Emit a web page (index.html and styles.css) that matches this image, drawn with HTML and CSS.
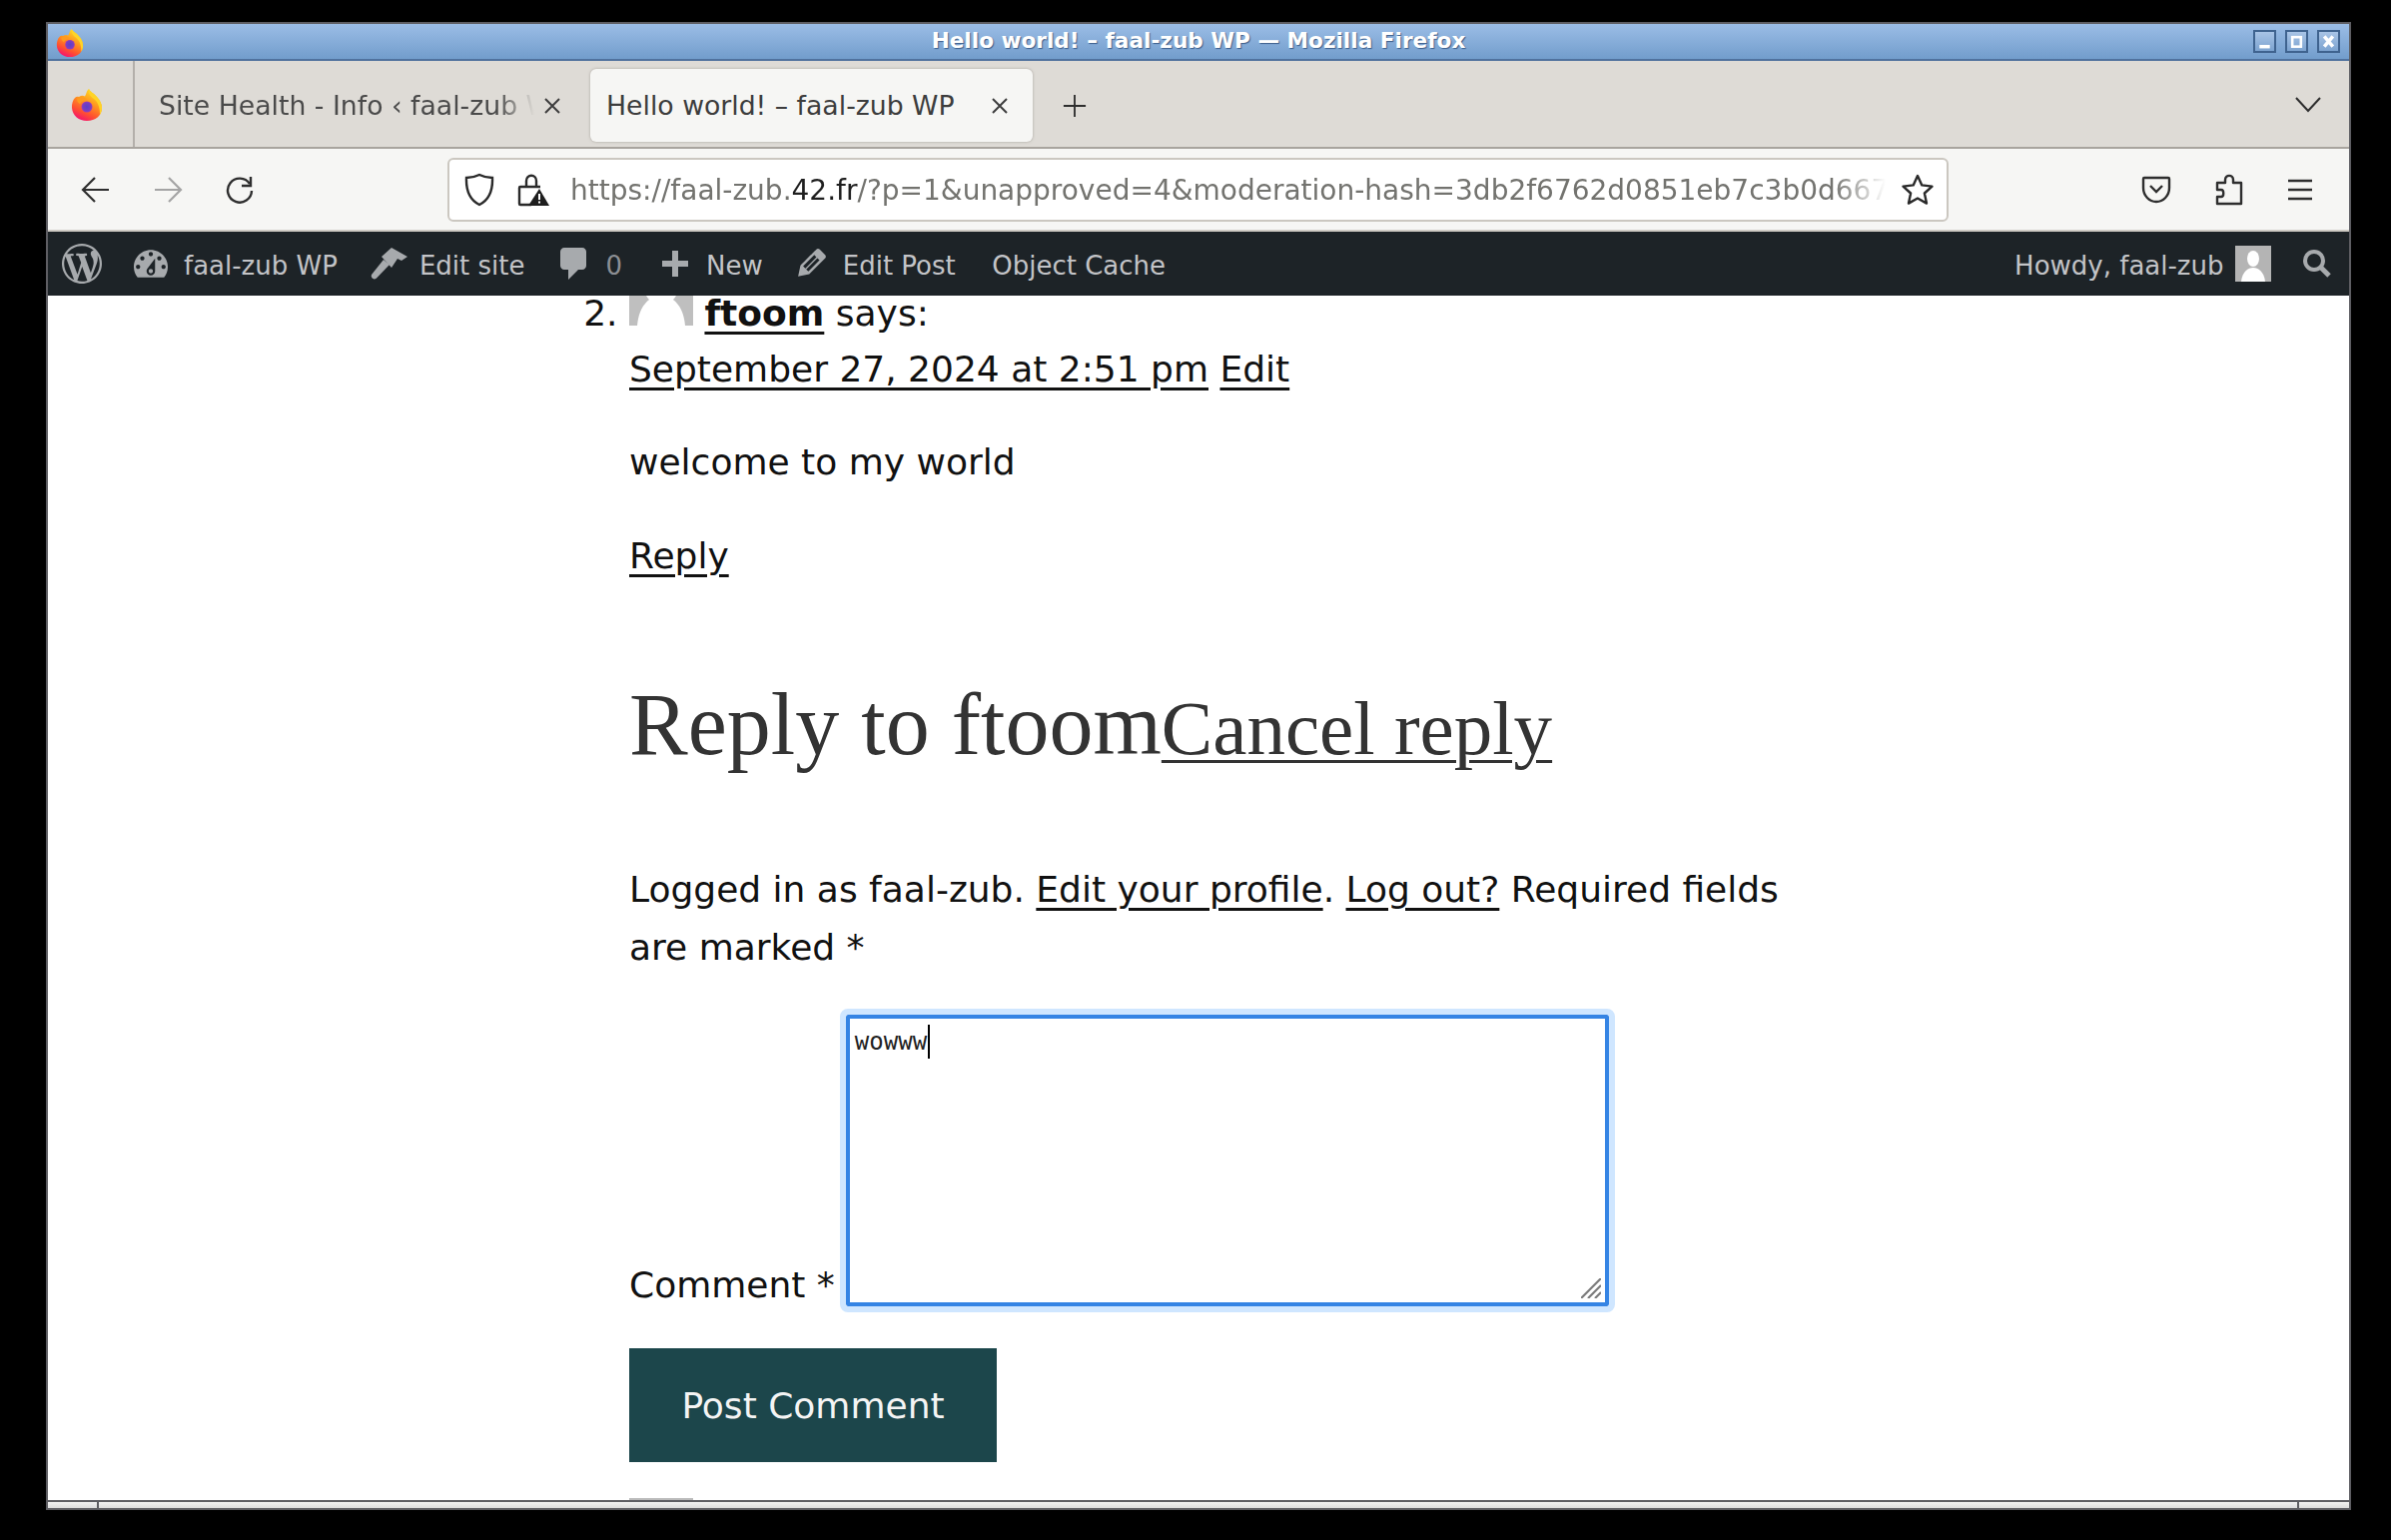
FILE: index.html
```html
<!DOCTYPE html>
<html lang="en">
<head>
<meta charset="utf-8">
<title>Hello world! – faal-zub WP — Mozilla Firefox</title>
<link rel="stylesheet" href="styles.css">
</head>
<body>
<svg class="defs" aria-hidden="true">
  <defs>
    <linearGradient id="fxOuter" x1="0.8" y1="0.05" x2="0.35" y2="1">
      <stop offset="0" stop-color="#ffe226"/>
      <stop offset="0.4" stop-color="#ff9a1f"/>
      <stop offset="0.75" stop-color="#ff5030"/>
      <stop offset="1" stop-color="#f5156c"/>
    </linearGradient>
    <radialGradient id="fxInner" cx="0.5" cy="0.5" r="0.55">
      <stop offset="0" stop-color="#5b3fc8"/>
      <stop offset="0.65" stop-color="#7a3ec0"/>
      <stop offset="1" stop-color="#b13bb0"/>
    </radialGradient>
    <symbol id="firefox" viewBox="0 0 32 34">
      <path fill="url(#fxOuter)" d="M18 1c1 3 5 4 8 8 3 3 5 7 5 11 0 7.700-6.500 13-15 13C8 33 1.500 27.700 1 20c-.3-4 1-8 3-10 1-1.200 2.500-1.500 4-1 2-1.300 4.500-1.500 6-.5C16 5 15.500 3 18 1z"/>
      <path fill="#ffd426" d="M18 1c1 3 5 4 8 8 3 3 5 7 5 11 0 3-1 5-2 7 0-6-1-12-6-16-3-2-6-5-5-10z"/>
      <circle cx="16" cy="19" r="5.500" fill="url(#fxInner)"/>
      <path fill="#ff9a1f" d="M6 11c3-2 8-2 10 1-3 0-5 1-7 4-2-1-3-3-3-5z"/>
    </symbol>
  </defs>
</svg>
<div class="window">
  <header class="titlebar">
    <svg class="title-logo"><use href="#firefox"/></svg>
    <div class="title-text">Hello world! – faal-zub WP — Mozilla Firefox</div>
    <div class="win-btns">
      <span class="win-btn"><svg viewBox="0 0 22 22"><rect x="5" y="15" width="12" height="4" fill="#fff"/></svg></span>
      <span class="win-btn"><svg viewBox="0 0 22 22"><rect x="6" y="6" width="10" height="11" fill="none" stroke="#fff" stroke-width="3"/></svg></span>
      <span class="win-btn"><svg viewBox="0 0 22 22"><path d="M6 5l10 12M16 5L6 17" stroke="#fff" stroke-width="4" fill="none"/></svg></span>
    </div>
  </header>

  <div class="tabbar">
    <div class="fx-cell"><svg class="fx-logo"><use href="#firefox"/></svg></div>
    <div class="tab tab-bg">
      <span class="tab-label">Site Health - Info ‹ faal-zub WP</span>
      <svg class="tab-close" viewBox="0 0 20 20"><path d="M3 3l14 14M17 3L3 17" stroke="#3d3d3d" stroke-width="2" fill="none"/></svg>
    </div>
    <div class="tab tab-active">
      <span class="tab-label-active">Hello world! – faal-zub WP</span>
      <svg class="tab-close" viewBox="0 0 20 20"><path d="M3 3l14 14M17 3L3 17" stroke="#3d3d3d" stroke-width="2" fill="none"/></svg>
    </div>
    <svg class="new-tab" viewBox="0 0 26 26"><path d="M13 1v24M1 13h24" stroke="#2e2e2e" stroke-width="2" fill="none"/></svg>
    <svg class="tab-list" viewBox="0 0 26 16"><path d="M1 1l12 13L25 1" stroke="#2e2e2e" stroke-width="2" fill="none"/></svg>
  </div>

  <nav class="navbar">
    <svg class="nav-icon nav-back" viewBox="0 0 30 30"><path d="M28 15H3M14 3L2 15l12 12" stroke="#2e2e2e" stroke-width="2.200" fill="none"/></svg>
    <svg class="nav-icon nav-fwd" viewBox="0 0 30 30"><path d="M2 15h25M16 3l12 12-12 12" stroke="#a4a4a4" stroke-width="2.200" fill="none"/></svg>
    <svg class="nav-icon nav-reload" viewBox="0 0 30 30"><path d="M25 9A12 12 0 1 0 27 16" stroke="#2e2e2e" stroke-width="2.400" fill="none"/><path d="M26 2v9h-9" stroke="#2e2e2e" stroke-width="2.400" fill="none"/></svg>
    <div class="urlbar">
      <svg class="url-shield" viewBox="0 0 30 34"><path d="M15 2c4 2 8 3 13 3 .5 12-3 22-13 27C5 27 1.500 17 2 5c5 0 9-1 13-3z" stroke="#2a2a2a" stroke-width="2.400" fill="none"/></svg>
      <svg class="url-lock" viewBox="0 0 32 34"><path d="M9 14V8c0-7 10-7 10 0v6" stroke="#2a2a2a" stroke-width="2.400" fill="none"/><path d="M14 32H3a1 1 0 0 1-1-1V15a1 1 0 0 1 1-1h20" stroke="#2a2a2a" stroke-width="2.400" fill="none"/><path d="M22 16l10 17H11z" fill="#1e1e1e"/><path d="M22 21v6M22 28.500v2" stroke="#fff" stroke-width="2"/></svg>
      <div class="url-text"><span class="url-dim">https://faal-zub.</span><span class="url-host">42.fr</span><span class="url-dim">/?p=1&amp;unapproved=4&amp;moderation-hash=3db2f6762d0851eb7c3b0d667a8e1f</span></div>
      <svg class="url-star" viewBox="0 0 34 34"><path d="M17 3l4.300 9.400 10.200 1.200-7.600 6.900 2.100 10.100L17 25.500l-9 5.100 2.100-10.100-7.600-6.900 10.200-1.200z" stroke="#2a2a2a" stroke-width="2.400" fill="none" stroke-linejoin="round"/></svg>
    </div>
    <div class="nav-right">
      <svg class="nav-icon" viewBox="0 0 30 30"><path d="M3 3h24a1 1 0 0 1 1 1v9c0 8-6 14-13 14S2 21 2 13V4a1 1 0 0 1 1-1z" stroke="#2e2e2e" stroke-width="2.400" fill="none"/><path d="M9 11l6 6 6-6" stroke="#2e2e2e" stroke-width="2.400" fill="none"/></svg>
      <svg class="nav-ext" viewBox="0 0 28 32"><path d="M10 9V6c0-5.500 8-5.500 8 0v3h8v21H2v-7h4c3 0 3-7 0-7H2V9z" stroke="#2e2e2e" stroke-width="2.400" fill="none" stroke-linejoin="round"/></svg>
      <svg class="nav-icon nav-menu" viewBox="0 0 30 30"><path d="M3 6h24M3 15h24M3 24h24" stroke="#2e2e2e" stroke-width="2.400" fill="none"/></svg>
    </div>
  </nav>

  <div class="adminbar">
    <a class="ab-logo"><svg class="ab-svg-logo" viewBox="0 0 20 20"><path d="M20 10c0-5.510-4.490-10-10-10C4.480 0 0 4.490 0 10c0 5.520 4.480 10 10 10 5.510 0 10-4.480 10-10zM7.780 15.370L4.370 6.220c.55-.02 1.170-.08 1.170-.08.5-.06.44-1.130-.06-1.110 0 0-1.450.11-2.370.11-.18 0-.37 0-.58-.01C4.120 2.690 6.870 1.110 10 1.110c2.330 0 4.450.87 6.050 2.340-.68-.11-1.650.39-1.650 1.580 0 .74.45 1.360.9 2.100.35.61.55 1.360.55 2.460 0 1.490-1.400 5-1.400 5l-3.030-8.370c.54-.02.82-.17.82-.17.5-.05.44-1.250-.06-1.220 0 0-1.440.12-2.380.12-.87 0-2.330-.12-2.330-.12-.5-.03-.56 1.200-.06 1.220l.92.08 1.260 3.410zM17.410 10c.24-.64.74-1.870.43-4.250.7 1.290 1.050 2.710 1.050 4.250 0 3.290-1.730 6.240-4.400 7.780.97-2.590 1.940-5.200 2.920-7.780zM6.100 18.090C3.120 16.650 1.110 13.530 1.110 10c0-1.300.23-2.480.72-3.590C3.250 10.300 4.670 14.200 6.100 18.090zm4.030-6.630l2.580 6.980c-.86.29-1.760.45-2.710.45-.79 0-1.570-.11-2.290-.33.81-2.380 1.620-4.740 2.420-7.100z"/></svg></a>
    <a class="ab-item"><svg class="ab-svg" viewBox="2 3 16 13"><path d="M3.760 16h12.480c1.100-1.370 1.760-3.110 1.760-5 0-4.420-3.580-8-8-8s-8 3.580-8 8c0 1.890.66 3.630 1.760 5zM10 4c.55 0 1 .45 1 1s-.45 1-1 1-1-.45-1-1 .45-1 1-1zM6 6c.55 0 1 .45 1 1s-.45 1-1 1-1-.45-1-1 .45-1 1-1zm8 0c.55 0 1 .45 1 1s-.45 1-1 1-1-.45-1-1 .45-1 1-1zm-5.370 5.550L12 7v6c0 1.100-.9 2-2 2s-2-.9-2-2c0-.57.24-1.080.63-1.450zM4 10c.55 0 1 .45 1 1s-.45 1-1 1-1-.45-1-1 .45-1 1-1zm12 0c.55 0 1 .45 1 1s-.45 1-1 1-1-.45-1-1 .45-1 1-1zm-5 3c0-.55-.45-1-1-1s-1 .45-1 1 .45 1 1 1 1-.45 1-1z"/></svg><span>faal-zub WP</span></a>
    <a class="ab-item ab-tight"><svg class="ab-svg-brush" viewBox="0 0 38 32"><path d="M2 27L14 12l6 5L7 30.500c-2.500 2-6 .5-5-3.500z"/><path d="M12 9L22 0l16 9-6 4-4-2-6 9z"/></svg><span>Edit site</span></a>
    <a class="ab-item ab-comments"><svg class="ab-svg-comment" viewBox="3 2 13 16"><path d="M5 2h9c1.100 0 2 .9 2 2v7c0 1.100-.9 2-2 2h-2l-5 5v-5H5c-1.100 0-2-.9-2-2V4c0-1.100.9-2 2-2z"/></svg><span class="ab-count">0</span></a>
    <a class="ab-item ab-new"><svg class="ab-svg-plus" viewBox="4 2 13 13"><path d="M17 7v3h-5v5H9v-5H4V7h5V2h3v5h5z"/></svg><span>New</span></a>
    <a class="ab-item ab-edit"><svg class="ab-svg-pencil" viewBox="3 3 14 15"><path d="M13.890 3.390l2.710 2.720c.46.46.42 1.240.03 1.640l-8.010 8.020-5.560 1.160 1.160-5.580s7.600-7.630 7.990-8.030c.39-.39 1.220-.39 1.680.07zm-2.730 2.790l-5.590 5.610 1.110 1.110 5.540-5.650zm-2.970 8.230l5.580-5.600-1.070-1.080-5.590 5.600z"/></svg><span>Edit Post</span></a>
    <a class="ab-item ab-cache"><span>Object Cache</span></a>
    <a class="ab-item ab-account"><span>Howdy, faal-zub</span>
      <svg class="ab-avatar" viewBox="0 0 36 36"><rect width="36" height="36" fill="#b4b4b4"/><ellipse cx="18" cy="13" rx="6" ry="8" fill="#fff"/><path d="M6 36c1-10 7-14 12-14s11 4 12 14z" fill="#fff"/></svg></a>
    <a class="ab-search"><svg class="ab-svg-search" viewBox="0 0 30 30"><circle cx="12" cy="12" r="9" fill="none" stroke="#a7aaad" stroke-width="4"/><path d="M18 18l9 9" stroke="#a7aaad" stroke-width="5"/></svg></a>
  </div>

  <main class="viewport">
    <div class="page">
      <ol class="comments" start="2">
        <li>
          <div class="comment-head"><svg class="avatar" viewBox="0 0 64 64"><rect width="64" height="64" fill="#bfbfbf"/><circle cx="32" cy="26" r="17" fill="#fff"/><path d="M8 64c2-22 14-30 24-30s22 8 24 30z" fill="#fff"/></svg> <a class="author">ftoom</a> says:</div>
          <div class="comment-meta"><a>September 27, 2024 at 2:51 pm</a> <a>Edit</a></div>
          <p class="comment-body">welcome to my world</p>
          <a class="reply-link">Reply</a>
        </li>
      </ol>
      <h3 class="reply-title">Reply to ftoom<a class="cancel">Cancel reply</a></h3>
      <p class="logged">Logged in as faal-zub. <a>Edit your profile</a>. <a>Log out?</a> Required fields are marked *</p>
      <div class="comment-field">
        <label class="comment-label">Comment *</label>
        <div class="textarea"><span class="typed">wowww</span><span class="caret"></span>
          <svg class="grip" viewBox="0 0 20 20"><path d="M0 20L20 0M7 20L20 7M14 20l6-6" stroke="#7c7c7c" stroke-width="2.200" fill="none"/></svg>
        </div>
      </div>
      <button class="submit" type="button">Post Comment</button>
      <div class="next-avatar"></div>
    </div>
  </main>

  <footer class="statusbar"><span class="st-cell st-left"></span><span class="st-cell st-mid"></span><span class="st-cell st-right"></span></footer>
</div>
</body>
</html>
```
FILE: styles.css
```css
* { box-sizing: border-box; }
html, body { margin: 0; height: 100%; background: #000; overflow: hidden; }
body { padding: 22px 40px 30px 46px; font-family: "DejaVu Sans", sans-serif; }
.defs { position: absolute; width: 0; height: 0; }

.window { height: 1490px; display: flex; flex-direction: column; border: 2px solid #5e5e63; background: #fff; overflow: hidden; }

.titlebar { height: 37px; flex: none; position: relative; display: flex; align-items: center; justify-content: center; background: linear-gradient(#9bbde6, #729dcc); border-bottom: 2px solid #50729e; }
.title-logo { position: absolute; left: 8px; top: 4px; width: 28px; height: 30px; }
.title-text { color: #fff; font-weight: 700; font-size: 21.600px; text-shadow: 1px 1px 1px #3d5f8c; padding-bottom: 2px; }
.win-btns { position: absolute; right: 9px; top: 6px; display: flex; gap: 9px; }
.win-btn { width: 23px; height: 23px; display: block; border: 2px solid #3f638f; background: linear-gradient(#a8c4e6, #7ca3d0); }
.win-btn svg { display: block; width: 100%; height: 100%; }

.tabbar { height: 88px; flex: none; display: flex; align-items: center; background: #dedbd6; border-bottom: 2px solid #a8a49e; color: #3d3d3d; font-size: 26.700px; position: relative; }
.fx-cell { width: 87px; height: 100%; flex: none; display: flex; align-items: center; justify-content: center; padding: 2px 8px 0 0; border-right: 2px solid #b3afaa; }
.fx-logo { width: 32px; height: 34px; }
.tab { display: flex; align-items: center; height: 73px; flex: none; margin-top: 3px; }
.tab-bg { width: 457px; padding: 0 29px 0 24px; }
.tab-label { flex: 1; white-space: nowrap; overflow: hidden; color: #4a4a4a; -webkit-mask-image: linear-gradient(90deg, #000 90%, transparent); mask-image: linear-gradient(90deg, #000 90%, transparent); }
.tab-close { width: 20px; height: 20px; flex: none; margin-left: 8px; }
.tab-active { width: 443px; padding: 0 23px 0 16px; background: #f6f6f4; border-radius: 6px; box-shadow: 0 0 3px #a8a49e; justify-content: space-between; margin-left: -1px; }
.tab-label-active { white-space: nowrap; color: #3d3d3d; }
.new-tab { width: 24px; height: 24px; margin: 4px 0 0 30px; }
.tab-list { position: absolute; right: 28px; top: 36px; width: 26px; height: 16px; }

.navbar { height: 83px; flex: none; display: flex; align-items: center; background: #f6f6f4; border-bottom: 2px solid #cfcbc4; }
.nav-icon { width: 30px; height: 30px; flex: none; }
.nav-ext { width: 28px; height: 32px; flex: none; }
.nav-back { margin-left: 33px; }
.nav-fwd { margin-left: 42px; }
.nav-reload { margin-left: 42px; }
.urlbar { width: 1503px; height: 64px; margin-left: 193px; display: flex; align-items: center; background: #fff; border: 2px solid #cbc7c0; border-radius: 6px; }
.url-shield { width: 30px; height: 34px; margin-left: 15px; flex: none; }
.url-lock { width: 32px; height: 34px; margin-left: 23px; flex: none; }
.url-text { width: 1317px; margin-left: 21px; padding-top: 2px; white-space: nowrap; overflow: hidden; font-size: 28px; flex: none; -webkit-mask-image: linear-gradient(90deg, #000 96%, transparent); mask-image: linear-gradient(90deg, #000 96%, transparent); }
.url-dim { color: #73736f; }
.url-host { color: #1f1f1f; }
.url-star { width: 34px; height: 34px; margin-left: 15px; flex: none; }
.nav-right { display: flex; gap: 44px; margin-left: 193px; align-items: center; }
.nav-menu { margin-left: -2px; }

.adminbar { height: 64px; flex: none; display: flex; align-items: center; background: #1d2327; color: #c3c4c7; font-size: 26px; }
.adminbar a { display: flex; align-items: center; height: 100%; }
.adminbar span { padding-top: 3px; }
.adminbar svg { fill: #a7aaad; flex: none; }
.ab-logo { padding: 0 16px 0 14px; }
.ab-svg-logo { width: 40px; height: 40px; }
.ab-item { padding: 0 16px; gap: 16px; }
.ab-svg { width: 34px; height: 28px; }
.ab-tight { gap: 12px; }
.ab-svg-brush { width: 38px; height: 32px; }
.ab-comments { padding-left: 20px; gap: 19px; }
.ab-svg-comment { width: 26px; height: 32px; }
.ab-count { color: #8c8f94; }
.ab-new { padding-left: 24px; gap: 18px; }
.ab-svg-plus { width: 26px; height: 26px; }
.ab-edit { padding-left: 19px; gap: 17px; }
.ab-svg-pencil { width: 28px; height: 30px; }
.ab-cache { padding-left: 20.500px; }
.ab-account { margin-left: auto; padding: 0; gap: 11.500px; }
.ab-avatar { width: 36px; height: 36px; }
.ab-search { padding: 0 17.500px 0 30.500px; }
.ab-svg-search { width: 30px; height: 30px; }

.viewport { flex: 1; overflow: hidden; background: #fff; }
.page { margin-top: -34px; padding-left: 582px; color: #111; font-size: 36px; line-height: 58px; }
.page a { color: #111; text-decoration: underline; text-decoration-thickness: 3px; text-underline-offset: 6px; }
.comments { margin: 0; padding: 0; }
.avatar { width: 64px; height: 64px; vertical-align: baseline; }
.author { font-weight: 700; }
.comment-meta { margin-top: -2px; }
.comment-body { margin: 35px 0 36px; }
.reply-title { margin: 85px 0 0; font-family: "Liberation Serif", serif; font-weight: 400; font-size: 88px; line-height: 110px; color: #333; }
.page .cancel { font-size: 77px; color: #333; }
.logged { width: 1160px; margin: 78px 0 0; }
.comment-field { display: flex; align-items: flex-end; gap: 11px; margin-top: 38px; }
.textarea { width: 764px; height: 292px; padding: 0 0 0 5px; border: 4px solid #3584e4; border-radius: 2px; outline: 6px solid #cfe6ff; position: relative; font-family: "DejaVu Sans Mono", monospace; font-size: 24px; line-height: 46px; color: #222; display: flex; align-items: flex-start; background: #fff; }
.caret { width: 2px; height: 34px; background: #000; margin: 6px 0 0 1px; }
.grip { position: absolute; right: 4px; bottom: 4px; width: 20px; height: 20px; }
.comment-label { flex: none; line-height: 58px; margin-bottom: -8px; }
.submit { display: block; width: 368px; height: 114px; margin-top: 42px; border: 0; padding: 0; background: #1c464b; color: #f4f4f4; font-family: "DejaVu Sans", sans-serif; font-size: 36px; }
.next-avatar { width: 64px; height: 2px; margin-top: 36px; background: #bbb; }

.statusbar { height: 8px; flex: none; display: flex; border-top: 2px solid #5e5e63; background: linear-gradient(#f2f2f2, #dcdcdc); }
.st-cell { display: block; height: 100%; }
.st-left { width: 51px; border-right: 2px solid #5e5e63; }
.st-mid { flex: 1; }
.st-right { width: 52px; border-left: 2px solid #5e5e63; }
```
